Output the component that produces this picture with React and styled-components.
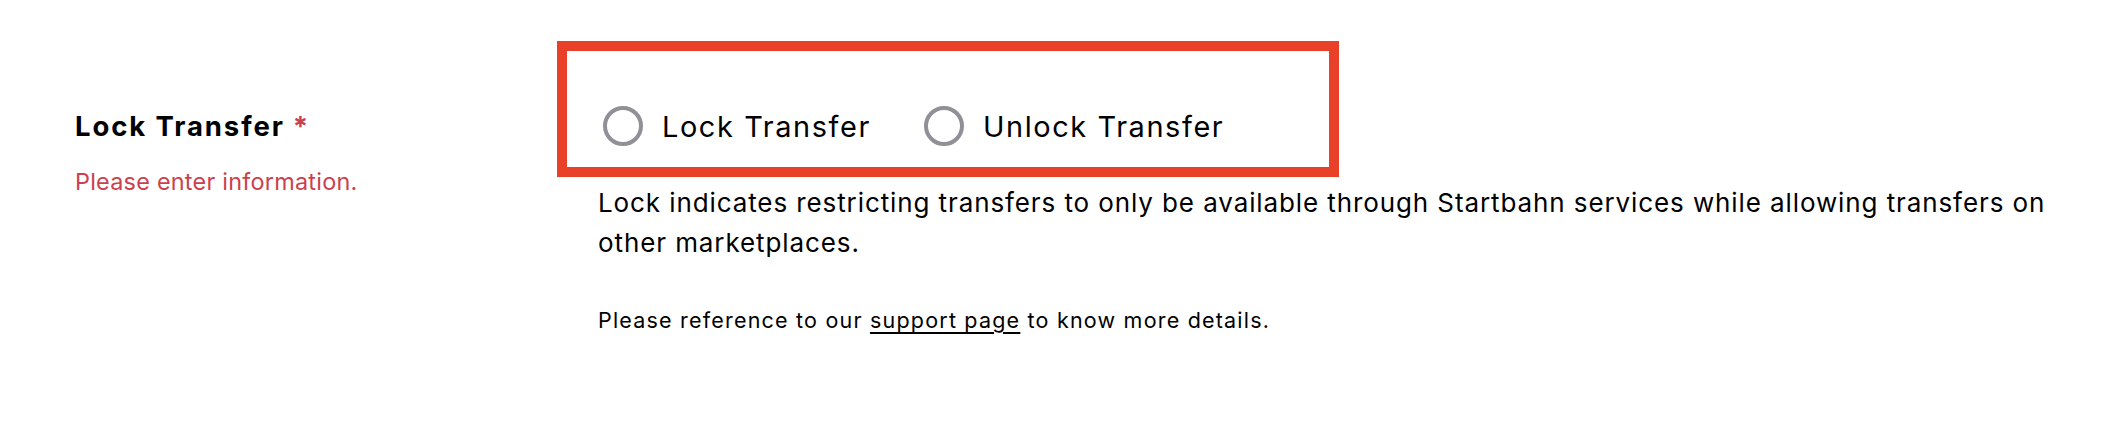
import React from "react";
import styled, { createGlobalStyle } from "styled-components";

const GlobalStyle = createGlobalStyle`
  html, body {
    margin: 0;
    padding: 0;
    background: #ffffff;
  }
  body {
    font-family: Inter, "Noto Sans", "Liberation Sans", sans-serif;
    color: #000000;
  }
`;

const Page = styled.div`
  width: 2112px;
  height: 432px;
  box-sizing: border-box;
  padding: 106px 20px 0 75px;
  display: grid;
  grid-template-columns: 523px 1fr;
  align-items: start;
`;

const LabelCol = styled.div`
  display: flex;
  flex-direction: column;
`;

const Title = styled.div`
  font-size: 27.5px;
  line-height: 40px;
  font-weight: 700;
  letter-spacing: 1.9px;
  color: #000;
`;

const Required = styled.span`
  color: #c8414b;
  margin-left: 8px;
  letter-spacing: 0;
`;

const ErrorText = styled.div`
  margin-top: 20px;
  font-size: 23.4px;
  line-height: 32px;
  letter-spacing: 0.25px;
  color: #cc3f4c;
`;

const ContentCol = styled.div`
  display: flex;
  flex-direction: column;
`;

const RadioGroup = styled.div`
  position: relative;
  display: flex;
  align-items: center;
  gap: 53px;
  height: 40px;
  padding-left: 5px;
`;

const Highlight = styled.div`
  position: absolute;
  left: -41px;
  top: -65px;
  width: 782px;
  height: 136px;
  box-sizing: border-box;
  border: 10px solid #e9402a;
  pointer-events: none;
`;

const RadioOption = styled.label`
  display: flex;
  align-items: center;
  gap: 19px;
  font-size: 28.9px;
  letter-spacing: 1.6px;
  color: #000;
  cursor: pointer;
`;

const RadioCircle = styled.span`
  width: 40px;
  height: 40px;
  box-sizing: border-box;
  border-radius: 50%;
  border: 4px solid ${(p) => (p.$checked ? "#000" : "#8f9197")};
  flex-shrink: 0;
`;

const Description = styled.p`
  margin: 37px 0 0;
  font-size: 26px;
  line-height: 40px;
  letter-spacing: 0.9px;
`;

const Note = styled.p`
  margin: 42px 0 0;
  font-size: 21.5px;
  line-height: 30px;
  letter-spacing: 1.2px;

  a {
    color: #000;
    text-decoration: underline;
    text-decoration-thickness: 2px;
    text-underline-offset: 4px;
  }
`;

const options = ["Lock Transfer", "Unlock Transfer"];

export default function App() {
  return (
    <>
      <GlobalStyle />
      <Page>
        <LabelCol>
          <Title>
            Lock Transfer<Required>*</Required>
          </Title>
          <ErrorText>Please enter information.</ErrorText>
        </LabelCol>
        <ContentCol>
          <RadioGroup>
            <Highlight />
            {options.map((o) => (
              <RadioOption key={o}>
                <RadioCircle />
                {o}
              </RadioOption>
            ))}
          </RadioGroup>
          <Description>
            Lock indicates restricting transfers to only be available through
            Startbahn services while allowing transfers on other marketplaces.
          </Description>
          <Note>
            Please reference to our <a href="#support">support page</a> to know
            more details.
          </Note>
        </ContentCol>
      </Page>
    </>
  );
}
